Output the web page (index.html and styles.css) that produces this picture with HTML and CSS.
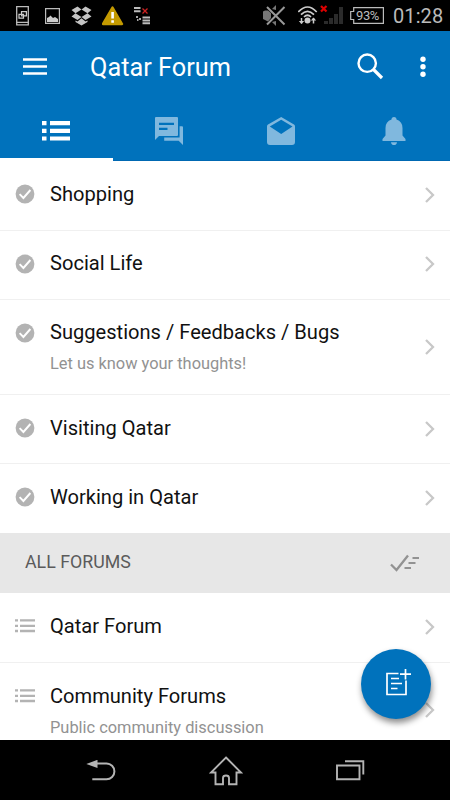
FILE: index.html
```html
<!DOCTYPE html>
<html lang="en">
<head>
<meta charset="utf-8">
<title>Qatar Forum</title>
<link rel="stylesheet" href="styles.css">
</head>
<body>
<svg class="defs" width="0" height="0">
  <symbol id="check" viewBox="0 0 20 20"><circle cx="10" cy="10" r="9.4" fill="#b3b3b3"/><path d="M4.6 10.2 8.4 14 15.4 6" fill="none" stroke="#fff" stroke-width="1.9"/></symbol>
  <symbol id="chevron" viewBox="0 0 10 16"><path d="M1 1 8 8 1 15" fill="none" stroke="#c8c8c8" stroke-width="2.3"/></symbol>
  <symbol id="list" viewBox="0 0 20 14"><path d="M0 1.4H3M5 1.4H20M0 6.8H3M5 6.8H20M0 12H3M5 12H20" fill="none" stroke="#b3b3b3" stroke-width="2.3"/></symbol>
</svg>
<div class="screen">
  <div class="status">
    <div class="notices">
      <svg width="14" height="21" viewBox="16 6 14 21"><path d="M16.7 6.7H28.3V24.8H16.7ZM16 22.4H29" fill="none" stroke="#bbb" stroke-width="1.3"/><path d="M21.5 11.7H26.4V15.8H21.5ZM19 14.3H23.5V18.2H19Z" fill="#000" stroke="#ccc" stroke-width="1.2"/></svg>
      <svg width="16" height="17" viewBox="45 8 16 17"><path d="M45.6 8.6H59.4V23.4H45.6Z" fill="none" stroke="#bbb" stroke-width="1.2"/><path d="M47 22V18L49 17 50.5 15.5 53 18 55 17 58 19V22Z" fill="#ccc"/></svg>
      <svg width="21" height="20" viewBox="72 6 21 20" fill="#c4c4c4"><path d="M78.5 6.5 82.5 9.5 76.5 13.3 72.5 10ZM86.5 6.5 92.5 10 88.5 13.3 82.5 9.5ZM72.5 16.5 76.5 13.3 82.5 17 78.5 20ZM92.5 16.5 88.5 13.3 82.5 17 86.5 20ZM76.5 20.5 78.5 21.5 82.5 18.2 86.5 21.5 88.5 20.5V22L82.5 25.5 76.5 22Z"/></svg>
      <svg width="22" height="21" viewBox="102 6 22 21"><path d="M112.5 7.5 122 24H103Z" fill="#c49a00" stroke="#c49a00" stroke-width="2.4" stroke-linejoin="round"/><path d="M112.6 12V18.5M112.6 20.3V22.8" stroke="#fff" stroke-width="2.6"/></svg>
      <svg width="17" height="18" viewBox="135 7 17 18"><path d="M135 8H141.5M135 11.2H141.5M143.5 17.5H151M143.5 20.4H151M143.5 23.2H151" stroke="#bbb" stroke-width="2"/><path d="M137 17H139M138 20H139.5M140 19H142" stroke="#ddd" stroke-width="1.6"/><path d="M143.5 8.5 148.5 13.5M148.5 8.5 143.5 13.5" stroke="#c22" stroke-width="1.3"/></svg>
    </div>
    <div class="system">
      <svg class="mute" width="23" height="22" viewBox="262 5 23 22"><path d="M262 11.5 264 10.5H267L270 13V18L267 21.5 264 20 262 19ZM271 9 275 5V10ZM271 22 275 26V21Z" fill="#777"/><path d="M266 7 283.5 24.5M283.5 7 266 24.5" stroke="#999" stroke-width="2"/></svg>
      <svg class="wifi" width="20" height="19" viewBox="297 6 20 19"><path d="M297.3 12Q306.5 2 315.7 12M300 14.7Q306.5 8 313 14.7M303 17Q306.5 13.5 310 17" fill="none" stroke="#ccc" stroke-width="1.7"/><circle cx="306.5" cy="20.5" r="3" fill="#ccc"/><path d="M300.5 18V23.5M312.5 18V23.5" stroke="#ccc" stroke-width="1.5"/><path d="M297.8 21H303.2L300.5 24ZM309.8 20.5H315.2L312.5 17.5Z" fill="#ccc"/></svg>
      <svg class="signal" width="24" height="20" viewBox="320 5 24 20"><path d="M324 21H328V24H324ZM329 18H333V24H329ZM334 14H338V24H334ZM339 7H343V24H339Z" fill="#2b2b2b"/><path d="M321 6 326.5 11.5M326.5 6 321 11.5" stroke="#d00" stroke-width="2.2"/></svg>
      <div class="battery"><svg width="34" height="17" viewBox="350 7 34 17"><path d="M353.7 7.6H383.4V23.4H353.7V19.5H350.7V11.5H353.7Z" fill="none" stroke="#bbb" stroke-width="1.2"/></svg><span>93%</span></div>
      <span class="clock">01:28</span>
    </div>
  </div>
  <header class="header">
    <div class="bar">
      <svg width="24" height="17" viewBox="0 0 24 17"><path d="M0 1.5H24M0 8.5H24M0 15.5H24" stroke="#fff" stroke-width="2.3"/></svg>
      <h1>Qatar Forum</h1>
      <svg class="search" width="27" height="27" viewBox="0 0 27 27"><circle cx="10.2" cy="10.2" r="8.7" fill="none" stroke="#fff" stroke-width="2.4"/><path d="M16.5 16.5 25 25" stroke="#fff" stroke-width="3.2"/></svg>
      <svg class="more" width="6" height="22" viewBox="0 0 6 22" fill="#fff"><circle cx="3" cy="3.2" r="2.7"/><circle cx="3" cy="10.7" r="2.7"/><circle cx="3" cy="18.2" r="2.7"/></svg>
    </div>
    <nav class="tabs">
      <div class="tab active"><svg width="28" height="20" viewBox="0 0 28 20"><path d="M0 2.2H4.5M8 2.2H28M0 9.8H4.5M8 9.8H28M0 17.5H4.5M8 17.5H28" stroke="#fff" stroke-width="4.2"/></svg></div>
      <div class="tab"><svg width="28" height="28" viewBox="0 0 28 28" fill="#80b8de"><path fill-rule="evenodd" d="M1 0H22Q23 0 23 1V18Q23 19 22 19H4L0 23V1Q0 0 1 0ZM4 5.8V8H19V5.8ZM4 10.8V13H12.5V10.8Z"/><path d="M24.6 9.3H27Q28 9.3 28 10.3V28L23.7 23.7H9.2V20.5H24.6Z"/></svg></div>
      <div class="tab"><svg width="28" height="28" viewBox="0 0 28 28"><path fill="#80b8de" fill-rule="evenodd" d="M14.2 0 27 7.5Q28 8.2 28 9.5V25Q28 28 25 28H3Q0 28 0 25V9.5Q0 8.2 1 7.5ZM14.2 2.8 2.8 9.5 14.2 17 25.5 9.5Z"/></svg></div>
      <div class="tab"><svg width="24" height="28" viewBox="0 0 24 28" fill="#80b8de"><path d="M9.5 2.5Q9.5 0 12 0T14.5 2.5Q20.5 4.5 20.5 11V18.5L23.5 22V24H.5V22L3.5 18.5V11Q3.5 4.5 9.5 2.5ZM9 25.2H15Q14.7 28 12 28T9 25.2Z"/></svg></div>
    </nav>
  </header>
  <main class="rows">
    <div class="row first"><svg class="mark"><use href="#check"/></svg><div class="label"><h2>Shopping</h2></div><svg class="chevron"><use href="#chevron"/></svg></div>
    <div class="row upper"><svg class="mark"><use href="#check"/></svg><div class="label"><h2>Social Life</h2></div><svg class="chevron"><use href="#chevron"/></svg></div>
    <div class="row tall"><svg class="mark"><use href="#check"/></svg><div class="label"><h2>Suggestions / Feedbacks / Bugs</h2><p>Let us know your thoughts!</p></div><svg class="chevron"><use href="#chevron"/></svg></div>
    <div class="row"><svg class="mark"><use href="#check"/></svg><div class="label"><h2>Visiting Qatar</h2></div><svg class="chevron"><use href="#chevron"/></svg></div>
    <div class="row last"><svg class="mark"><use href="#check"/></svg><div class="label"><h2>Working in Qatar</h2></div><svg class="chevron"><use href="#chevron"/></svg></div>
    <div class="section"><span>ALL FORUMS</span><svg width="29" height="18" viewBox="0 0 29 18" fill="none" stroke="#929292"><path d="M1 10.5 6.5 16 18 1.5" stroke-width="2.3"/><path d="M22.5 4H29M18.5 9H25.5M14.5 14H21" stroke-width="2"/></svg></div>
    <div class="row forum"><svg class="mark"><use href="#list"/></svg><div class="label"><h2>Qatar Forum</h2></div><svg class="chevron"><use href="#chevron"/></svg></div>
    <div class="row tall forum"><svg class="mark"><use href="#list"/></svg><div class="label"><h2>Community Forums</h2><p>Public community discussion</p></div><svg class="chevron"><use href="#chevron"/></svg></div>
  </main>
  <div class="fab"><svg width="26" height="28" viewBox="0 0 26 28" fill="none" stroke="#fff"><path d="M13.5 5.5H2V26.5H21V12.5" stroke-width="1.7"/><path d="M20.5 1V11.5M15 6.2H26M6 10.5H14M6 15.5H17M6 20.5H12.5" stroke-width="1.7"/></svg></div>
  <footer class="navbar">
    <svg width="30" height="22" viewBox="86 760 30 22"><path d="M94 763.5H106.5A7.5 7.5 0 0 1 106.5 779.3H92.3" fill="none" stroke="#b4b4b4" stroke-width="2"/><path d="M86.3 764 97.5 759.8V768Z" fill="#b4b4b4"/></svg>
    <svg width="34" height="30" viewBox="208 756 34 30"><path d="M225 757.5 240 772.5H235.5V784.3H228V778Q228 775.5 225 775.5T222 778V784.3H214.5V772.5H210Z" fill="none" stroke="#b4b4b4" stroke-width="1.9"/></svg>
    <svg width="29" height="21" viewBox="336 760 29 21"><path d="M337 765.5H359.5V779.3H337ZM345 761.2H363.3V774.5" fill="none" stroke="#b4b4b4" stroke-width="1.9"/></svg>
  </footer>
</div>
</body>
</html>
```

FILE: styles.css
```css
* { box-sizing: border-box; }
body { margin: 0; font-family: Roboto, sans-serif; }
h1, h2, p { margin: 0; font-weight: 400; white-space: nowrap; }
svg { display: block; flex: none; }
.defs { position: absolute; }
.screen { width: 450px; height: 800px; display: flex; flex-direction: column; overflow: hidden; background: #fff; position: relative; }

.status { height: 31px; flex: none; background: #000; display: flex; justify-content: space-between; padding: 0 8px 0 16px; color: #bbb; }
.notices, .system { display: flex; align-items: center; }
.notices { gap: 10px; padding-top: 1px; }
.notices svg:nth-child(2) { margin-left: 5px; }
.mute { margin-right: 12px; }
.wifi { margin-right: 2px; }
.signal { margin-bottom: 2px; }
.battery { width: 34px; margin: 0 9px 0 6px; display: grid; align-items: center; }
.battery > * { grid-area: 1 / 1; }
.battery span { padding-left: 6px; font-size: 13px; line-height: 16px; letter-spacing: -.4px; }
.clock { font-size: 20px; width: 49px; letter-spacing: .1px; }

.header { height: 130px; flex: none; background: #0072bc; border-bottom: 1px solid #0068b2; }
.bar { height: 71px; display: flex; align-items: center; padding: 0 24px 0 23px; }
.bar h1 { margin-left: 43px; flex: 1; color: #fff; font-size: 25.3px; line-height: 34px; padding-top: 3px; }
.more { margin-left: 36px; }
.tabs { height: 59px; display: grid; grid-template-columns: 113px 112px 112px 113px; }
.tab { display: flex; align-items: center; justify-content: center; padding-bottom: 2px; }
.tab.active { height: 59px; border-bottom: 3px solid #fff; padding: 1px 1px 0 0; }

.rows { flex: 1; min-height: 0; overflow: hidden; }
.row { height: 69px; display: flex; align-items: center; padding: 0 15px; border-bottom: 1px solid #f0f0f0; }
.row.first { height: 70px; }
.row.first, .row.upper { padding-bottom: 2px; }
.row.last { border-bottom-color: #fff; }
.row.tall { height: 95px; }
.mark { width: 20px; height: 20px; margin-bottom: 2px; }
.first .mark, .upper .mark { margin-bottom: 1px; }
.tall .mark { margin-bottom: 29px; }
.label { margin-left: 15px; flex: 1; }
.label h2 { font-size: 20.1px; line-height: 28px; color: #111; padding-bottom: 2px; }
.label p { font-size: 16.4px; line-height: 22px; color: #929292; padding-top: 5px; height: 28px; }
.chevron { width: 10px; height: 16px; }
.section { height: 60px; display: flex; align-items: center; justify-content: space-between; padding: 0 31px 0 25px; background: #e7e7e7; font-size: 17.8px; color: #5b5b5b; }
.section span { padding-bottom: 3px; }
.forum { height: 70px; }
.forum .mark { margin-bottom: 2px; }
.forum:not(.tall) { padding-bottom: 1px; }
.tall.forum .mark { margin-bottom: 28px; }
.tall.forum .label { padding-top: 1px; }

.fab { position: absolute; left: 361px; top: 649px; width: 70px; height: 70px; padding: 0 0 4px 4px; border-radius: 50%; background: #0072bc; box-shadow: 1px 4px 6px rgba(0,0,0,.45); display: flex; align-items: center; justify-content: center; }
.navbar { height: 60px; flex: none; background: #000; display: flex; align-items: center; justify-content: space-between; padding: 1px 85px 0 86px; }
```
